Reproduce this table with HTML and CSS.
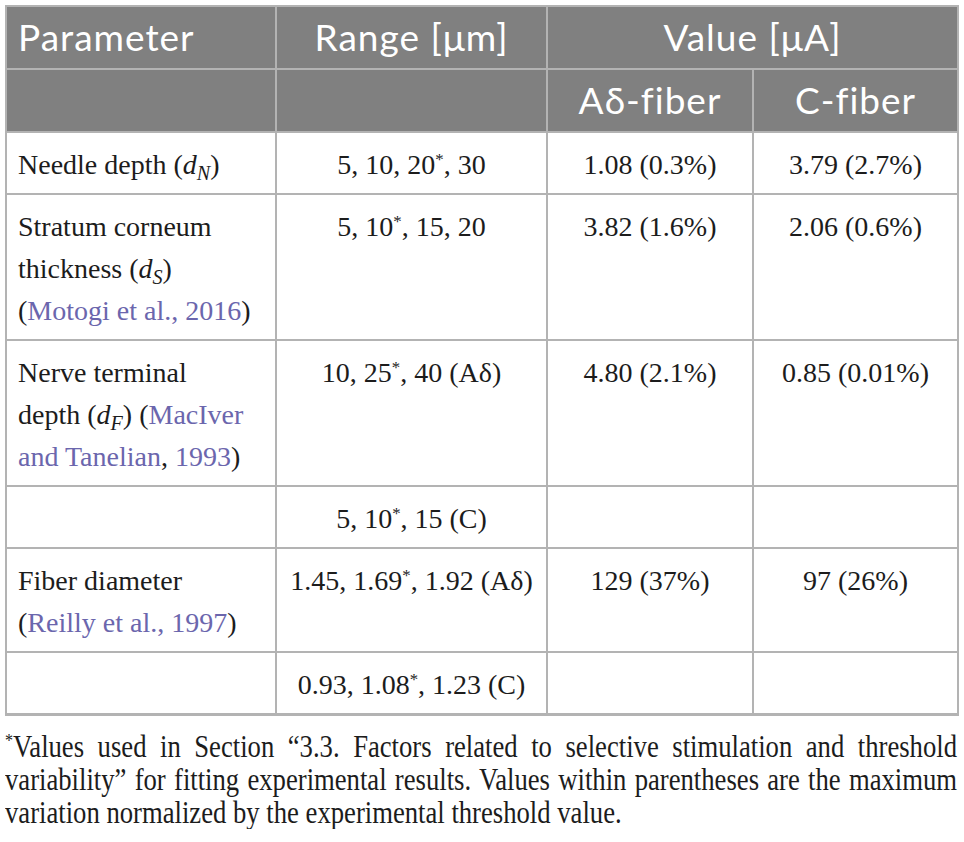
FILE: index.html
```html
<!DOCTYPE html>
<html lang="en">
<head>
  <meta charset="UTF-8" />
  <meta name="viewport" content="width=device-width, initial-scale=1.0" />
  <title>Table – model parameters</title>
  <link rel="stylesheet" href="styles.css">
</head>
<body>
  <div class="wrap">
    <table class="params">
      <colgroup>
        <col class="c1">
        <col class="c2">
        <col class="c3">
        <col class="c4">
      </colgroup>
      <thead>
        <tr>
          <th class="left">Parameter</th>
          <th>Range [&mu;m]</th>
          <th colspan="2">Value [&mu;A]</th>
        </tr>
        <tr>
          <th></th>
          <th></th>
          <th>A&delta;-fiber</th>
          <th>C-fiber</th>
        </tr>
      </thead>
      <tbody>
        <tr>
          <td class="left">Needle depth (<i>d<sub>N</sub></i>)</td>
          <td>5, 10, 20<sup>*</sup>, 30</td>
          <td>1.08 (0.3%)</td>
          <td>3.79 (2.7%)</td>
        </tr>
        <tr>
          <td class="left">Stratum corneum<br>thickness (<i>d<sub>S</sub></i>)<br>(<a href="#">Motogi et al., 2016</a>)</td>
          <td>5, 10<sup>*</sup>, 15, 20</td>
          <td>3.82 (1.6%)</td>
          <td>2.06 (0.6%)</td>
        </tr>
        <tr>
          <td class="left">Nerve terminal<br>depth (<i>d<sub>F</sub></i>) (<a href="#">MacIver</a><br><a href="#">and Tanelian</a>, <a href="#">1993</a>)</td>
          <td>10, 25<sup>*</sup>, 40 (A&delta;)</td>
          <td>4.80 (2.1%)</td>
          <td>0.85 (0.01%)</td>
        </tr>
        <tr>
          <td class="left"></td>
          <td>5, 10<sup>*</sup>, 15 (C)</td>
          <td></td>
          <td></td>
        </tr>
        <tr>
          <td class="left">Fiber diameter<br>(<a href="#">Reilly et al., 1997</a>)</td>
          <td>1.45, 1.69<sup>*</sup>, 1.92 (A&delta;)</td>
          <td>129 (37%)</td>
          <td>97 (26%)</td>
        </tr>
        <tr class="last">
          <td class="left"></td>
          <td>0.93, 1.08<sup>*</sup>, 1.23 (C)</td>
          <td></td>
          <td></td>
        </tr>
      </tbody>
    </table>

    <p class="note"><sup>*</sup>Values used in Section &ldquo;3.3. Factors related to selective stimulation and threshold variability&rdquo; for fitting experimental results. Values within parentheses are the maximum variation normalized by the experimental threshold value.</p>
  </div>
</body>
</html>
```

FILE: styles.css
```css
body {
  margin: 0;
  background: #fff;
  color: #1c1c1c;
  font-family: "Liberation Serif", "Times New Roman", serif;
}

.wrap {
  padding: 5px 7px 0 5px;
}

.params {
  width: 952px;
  border-collapse: collapse;
  table-layout: fixed;
  border: 2px solid #b3b3b3;
  border-bottom-width: 3px;
}

.c1 { width: 270px; }
.c2 { width: 271px; }
.c3 { width: 206px; }
.c4 { width: 205px; }

.params th,
.params td {
  border: 2px solid #b3b3b3;
  text-align: center;
}

.params th {
  background: #808080;
  color: #fff;
  font-family: Lato, "Open Sans", sans-serif;
  font-weight: normal;
  font-size: 37px;
  letter-spacing: 1px;
  height: 61px;
  padding: 0 11px;
  line-height: 1.1;
}

.params td {
  font-size: 28px;
  line-height: 42px;
  vertical-align: top;
  padding: 11px 11px 7px;
}

.params .left {
  text-align: left;
}

.params sub {
  font-size: 0.72em;
  line-height: 0;
  vertical-align: -0.28em;
}

sup {
  font-size: 0.6em;
  line-height: 0;
  vertical-align: 0.55em;
}

.params a {
  color: #6b66ad;
  text-decoration: none;
}

/* footnote is set in a condensed serif */
.note {
  margin: 14px 0 0;
  width: 1107px;
  transform: scaleX(0.86);
  transform-origin: left top;
  font-size: 31px;
  line-height: 33px;
  text-align: justify;
  color: #1c1c1c;
}
```
